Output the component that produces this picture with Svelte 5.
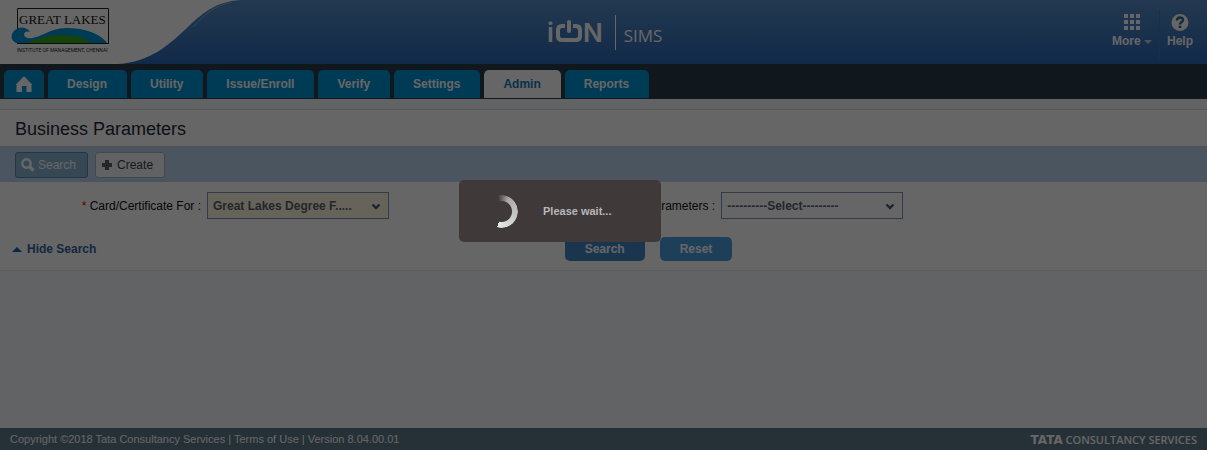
<script>
  const tabs = ['Design', 'Utility', 'Issue/Enroll', 'Verify', 'Settings', 'Admin', 'Reports'];
  const active = 'Admin';
  const cells = [0, 6, 12];
</script>

<div class="page">
  <header class="banner">
    <div class="brand">
      <svg width="250" height="64" viewBox="0 0 250 64" role="img" aria-label="Great Lakes">
        <path d="M0 0H240C216 2 204 12 190 25C168 46 150 62 118 64H0Z" fill="#fff" />
        <path d="M193 27C205 14 216 5 232 2" fill="none" stroke="#7fa9d6" stroke-width="1" />
        <path d="M17.500 29V8.500H108.500V43" fill="none" stroke="#222" />
        <text x="19" y="24" class="lakes">GREAT LAKES</text>
        <path d="M30 32C27 27 20 26 15 30C9 35 11 43 20 44H108C101 34 86 28 66 28C50 28 42 37 32 38C27 39 24 37 24 34C25 31 28 31 30 32Z" fill="#0095d8" />
        <path d="M22 44C34 41 43 35 62 35C78 35 87 39 93 44Z" fill="#38a51c" />
        <path d="M17 43.500H109" stroke="#222" />
        <text x="17" y="52" class="institute">INSTITUTE OF MANAGEMENT, CHENNAI</text>
      </svg>
    </div>
    <div class="product">
      <svg width="64" height="40" viewBox="0 0 64 40" role="img" aria-label="iON">
        <text x="2" y="30" class="ion">i</text>
        <path d="M20 14H17Q13 14 13 18V24Q13 28 17 28H31Q35 28 35 24V18Q35 14 31 14H28" fill="none" stroke="#fff" stroke-width="4" />
        <path d="M24 10V19" stroke="#fff" stroke-width="4" stroke-linecap="round" />
        <text x="38" y="30" class="ion">N</text>
      </svg>
      <span class="module">SIMS</span>
    </div>
    <div class="tools">
      <button class="tool">
        <svg width="16" height="17" viewBox="0 0 16 17" fill="#fff" aria-hidden="true">
          {#each cells as y}{#each cells as x}<rect {x} {y} width="4" height="4" />{/each}{/each}
        </svg>
        <span>More <i class="caret"></i></span>
      </button>
      <button class="tool help">
        <svg width="18" height="17" viewBox="0 0 18 17" aria-hidden="true">
          <circle cx="9" cy="8.500" r="8.500" fill="#fff" />
          <path d="M6 6.500C6 2.500 12 2.500 12 6C12 8 9 8 9 10.500" fill="none" stroke="#356598" stroke-width="2.400" />
          <rect x="7.700" y="11.700" width="2.600" height="2.400" fill="#356598" />
        </svg>
        <span>Help</span>
      </button>
    </div>
  </header>

  <nav>
    <a href="#home" class="tab home" aria-label="Home">
      <svg width="18" height="16" viewBox="0 0 18 16" aria-hidden="true"><path d="M9 0L17.500 9H16.500V16H11.500V10H7V16H1.500V9H0.500Z" fill="#fff" /></svg>
    </a>
    {#each tabs as tab}
      <a href="#{tab}" class="tab" class:active={tab === active}>{tab}</a>
    {/each}
  </nav>

  <main>
    <h1>Business Parameters</h1>
    <div class="toolbar">
      <button class="chip pressed">
        <svg width="14" height="14" viewBox="0 0 14 14" aria-hidden="true"><circle cx="5.500" cy="5.500" r="4.200" fill="none" stroke="#fff" stroke-width="2.400" /><path d="M8.500 8.500L12.500 12.500" stroke="#fff" stroke-width="3.200" /></svg>
        Search
      </button>
      <button class="chip">
        <svg width="12" height="12" viewBox="0 0 12 12" aria-hidden="true"><path d="M4 1H8V4H11V8H8V11H4V8H1V4H4Z" fill="#59636c" /></svg>
        Create
      </button>
    </div>

    <form>
      <div class="fields">
        <div class="field">
          <label for="card"><b class="star">*</b> Card/Certificate For :</label>
          <span class="select">
            <select id="card" class="filled"><option>Great Lakes Degree F.....</option></select>
            <svg width="10" height="7" viewBox="0 0 10 7" aria-hidden="true"><path d="M1.500 1.500L5 5L8.500 1.500" fill="none" stroke="#4c5b6e" stroke-width="2.400" /></svg>
          </span>
        </div>
        <div class="field">
          <label for="params">Parameters :</label>
          <span class="select">
            <select id="params"><option>----------Select---------</option></select>
            <svg width="10" height="7" viewBox="0 0 10 7" aria-hidden="true"><path d="M1.500 1.500L5 5L8.500 1.500" fill="none" stroke="#4c5b6e" stroke-width="2.400" /></svg>
          </span>
        </div>
      </div>
      <div class="actions">
        <a href="#hide" class="hide"><i></i>Hide Search</a>
        <div class="buttons">
          <button type="button" class="go search">Search</button>
          <button type="reset" class="go">Reset</button>
        </div>
      </div>
    </form>
  </main>

  <footer>
    <span>Copyright ©2018 Tata Consultancy Services | <a href="#terms">Terms of Use</a> | Version 8.04.00.01</span>
    <span class="tcs"><b>TATA</b> CONSULTANCY SERVICES</span>
  </footer>
</div>

<div class="overlay">
  <div class="wait" role="status">
    <i class="spinner"></i>
    <span>Please wait...</span>
  </div>
</div>

<style>
  :global(body) { margin: 0; }
  .page {
    display: flex;
    flex-direction: column;
    min-height: 100vh;
    background: #f5f7fb;
    font: 12px/16px "Liberation Sans", Arial, sans-serif;
    color: #222;
  }
  * { box-sizing: border-box; }
  button, select { font: inherit; }
  a { text-decoration: none; color: inherit; }

  .banner {
    display: grid;
    grid-template-columns: 1fr auto 1fr;
    height: 64px;
    background: linear-gradient(#588ec8, #2c68b6);
    color: #fff;
  }
  .brand svg { display: block; }
  .lakes { font: 13px "Liberation Serif", serif; fill: #111; }
  .institute { font: 5px Roboto, sans-serif; fill: #222; }
  .product { display: flex; align-items: center; }
  .ion { font: 600 26px Inter, sans-serif; fill: #fff; }
  .module {
    display: flex;
    align-items: center;
    height: 35px;
    margin-left: 6px;
    padding: 8px 0 0 8px;
    border-left: 1px solid #fff;
    font: 17px/24px "Open Sans", sans-serif;
  }
  .tools { display: flex; justify-content: flex-end; padding: 10px 7px 6px 0; }
  .tool {
    display: flex;
    flex-direction: column;
    align-items: center;
    gap: 2px;
    padding: 4px 7px 0;
    border: 0;
    background: none;
    color: #fff;
    font-weight: bold;
  }
  .tool.help { border-left: 1px solid #4579b4; }
  .caret {
    display: inline-block;
    margin-bottom: 1px;
    border: 4px solid transparent;
    border-top-color: #b8cce4;
    border-bottom: 0;
  }

  nav {
    display: flex;
    gap: 4px;
    height: 35px;
    padding: 6px 4px 1px;
    background: #283e4c;
  }
  .tab {
    padding: 6px 20px 6px 19px;
    border-radius: 5px 5px 0 0;
    background: #0093d6;
    color: #fff;
    font-weight: bold;
  }
  .tab.home { padding: 6px 11px; }
  .tab.active { background: #fff; color: #1b7cb8; }

  main { flex: 1; padding-top: 10px; }
  h1 {
    margin: 0;
    padding: 8px 15px 6px;
    border-top: 1px solid #d8dadd;
    border-bottom: 1px solid #c8d0d8;
    background: #fff;
    font-size: 18px;
    font-weight: normal;
    line-height: 22px;
    color: #222b38;
  }
  .toolbar { display: flex; gap: 7px; padding: 5px 15px 4px; background: #b9d5ee; }
  .chip {
    display: flex;
    align-items: center;
    gap: 4px;
    height: 26px;
    padding: 0 11px 0 5px;
    border: 1px solid #a6b4c4;
    border-radius: 3px;
    background: #f2f5fb;
    color: #3d4350;
  }
  .chip.pressed { gap: 3px; border-color: #5c86a8; background: #8ab4d4; color: #fff; }

  form { border-bottom: 1px solid #e2e6ea; background: #fff; }
  .fields { display: flex; padding-top: 10px; }
  .field { display: flex; align-items: center; gap: 6px; width: 42.6%; }
  label { flex: 0 0 201px; text-align: right; color: #111; }
  .star { color: #e00; font-weight: normal; }
  .select { position: relative; }
  select {
    appearance: none;
    display: block;
    width: 182px;
    height: 27px;
    padding: 0 5px;
    border: 1px solid #7f94ba;
    border-radius: 0;
    background: #fff;
    color: #59616d;
    font-weight: bold;
  }
  select.filled { background: #fff8e2; }
  .select svg { position: absolute; right: 8px; top: 11px; pointer-events: none; }
  .actions {
    display: grid;
    grid-template-columns: 96px 1fr;
    padding: 18px 18px 9px 12px;
  }
  .hide { display: flex; align-items: center; gap: 5px; color: #32669e; font-weight: bold; }
  .hide i { border: 5px solid transparent; border-bottom-color: #006cae; border-top: 0; }
  .buttons { display: flex; justify-content: center; gap: 15px; }
  .go {
    height: 24px;
    padding: 0 20px;
    border: 0;
    border-radius: 5px;
    background: #4d9fe0;
    color: #fff;
    font-weight: bold;
  }
  .go.search { background: #4288c6; }

  footer {
    display: flex;
    justify-content: space-between;
    align-items: center;
    height: 22px;
    padding: 0 10px;
    background: #607b8b;
    color: #fff;
    font-size: 11px;
  }
  .tcs { font: 600 11px "Open Sans", sans-serif; }
  .tcs b { font: bold 12px "DejaVu Sans", sans-serif; }

  .overlay {
    position: fixed;
    inset: 0;
    display: flex;
    justify-content: center;
    align-items: flex-start;
    padding: 40vh 87px 0 0;
    background: rgba(0, 0, 0, 0.6);
  }
  .wait {
    display: flex;
    align-items: center;
    gap: 25px;
    width: 202px;
    height: 62px;
    padding-left: 26px;
    border-radius: 5px;
    background: #3f3a39;
    color: #b8b8bc;
    font: bold 11px/16px "Liberation Sans", Arial, sans-serif;
  }
  .spinner {
    width: 33px;
    height: 33px;
    border-radius: 50%;
    background: conic-gradient(from 345deg, transparent, #aaa 45deg, #e8e8e8 210deg, transparent 210deg);
    mask: radial-gradient(circle, transparent 10px, #000 11px, #000 16px, transparent 17px);
  }
</style>
